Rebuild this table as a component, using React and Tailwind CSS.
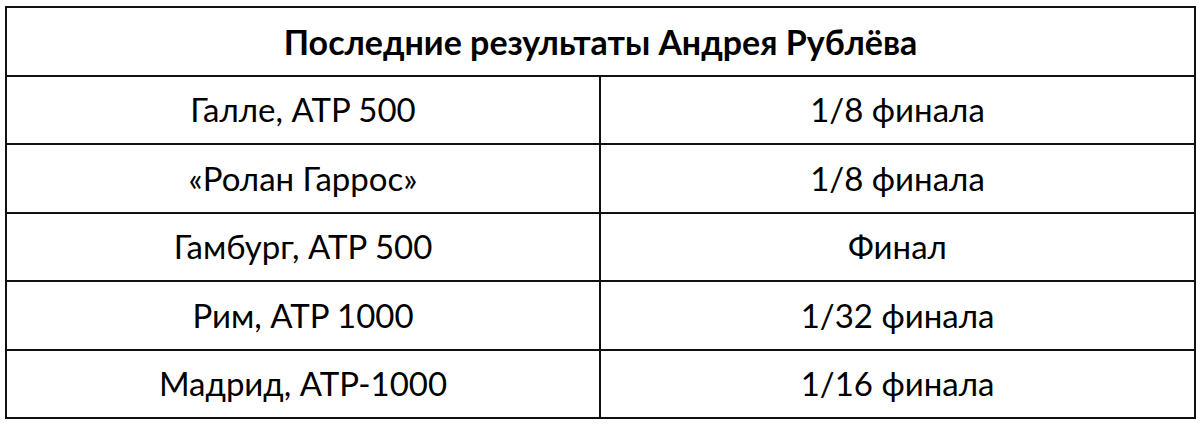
const ROWS = [
  ['Галле, ATP 500', '1/8 финала'],
  ['«Ролан Гаррос»', '1/8 финала'],
  ['Гамбург, ATP 500', 'Финал'],
  ['Рим, ATP 1000', '1/32 финала'],
  ['Мадрид, ATP-1000', '1/16 финала'],
]

export default function App() {
  return (
    <div className="w-[1200px] h-[424px] bg-white pt-[6px] pl-[5px] font-['Lato','Open_Sans',sans-serif] text-black">
      <div className="w-[1191px] border-2 border-[#111]">
        <div className="h-[66.5px] flex items-center justify-center text-[34px] font-bold">
          Последние результаты Андрея Рублёва
        </div>
        {ROWS.map(([event, result]) => (
          <div key={event} className="grid grid-cols-[594px_1fr] h-[68.5px] border-t-2 border-[#111] text-[33px]">
            <div className="flex items-center justify-center border-r-2 border-[#111]">{event}</div>
            <div className="flex items-center justify-center">{result}</div>
          </div>
        ))}
      </div>
    </div>
  )
}
